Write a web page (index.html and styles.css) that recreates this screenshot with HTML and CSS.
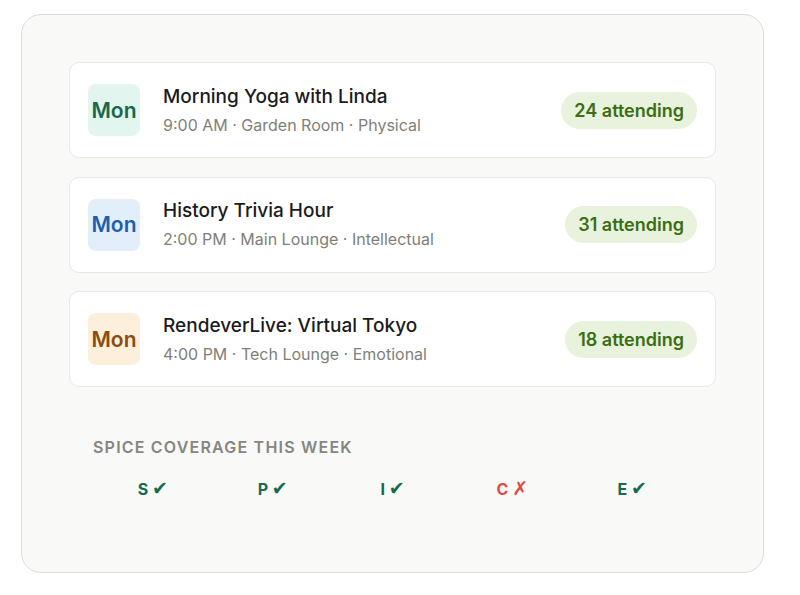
FILE: index.html
```html
<!DOCTYPE html>
<html>
<head>
<meta charset="utf-8">
<link rel="stylesheet" href="styles.css">
</head>
<body>
<div class="panel">
  <div class="list">
    <div class="card">
      <div class="day day-green">Mon</div>
      <div class="info">
        <div class="title">Morning Yoga with Linda</div>
        <div class="meta">9:00 AM · Garden Room · Physical</div>
      </div>
      <div class="pill">24 attending</div>
    </div>
    <div class="card">
      <div class="day day-blue">Mon</div>
      <div class="info">
        <div class="title">History Trivia Hour</div>
        <div class="meta">2:00 PM · Main Lounge · Intellectual</div>
      </div>
      <div class="pill">31 attending</div>
    </div>
    <div class="card">
      <div class="day day-orange">Mon</div>
      <div class="info">
        <div class="title">RendeverLive: Virtual Tokyo</div>
        <div class="meta">4:00 PM · Tech Lounge · Emotional</div>
      </div>
      <div class="pill">18 attending</div>
    </div>
  </div>
  <div class="coverage">
    <div class="cov-title">SPICE COVERAGE THIS WEEK</div>
    <div class="cov-row">
      <div class="cov ok">S <span class="mark">✔</span></div>
      <div class="cov ok">P <span class="mark">✔</span></div>
      <div class="cov ok">I <span class="mark">✔</span></div>
      <div class="cov bad">C <span class="mark">✗</span></div>
      <div class="cov ok">E <span class="mark">✔</span></div>
    </div>
  </div>
</div>
</body>
</html>
```
FILE: styles.css
```css
* { box-sizing: border-box; }
body {
  margin: 0;
  background: #ffffff;
  font-family: Inter, "Noto Sans", sans-serif;
}
.panel {
  margin: 14px 0 0 21px;
  width: 743px;
  height: 559px;
  background: #f9f9f7;
  border: 1px solid #dcdcd8;
  border-radius: 20px;
  padding: 47px;
}
.list {
  display: flex;
  flex-direction: column;
  gap: 18.5px;
}
.card {
  display: flex;
  align-items: center;
  background: #ffffff;
  border: 1px solid #e8e8e4;
  border-radius: 10px;
  padding: 21px 18px 21px 18px;
  height: 96px;
}
.day {
  width: 52px;
  height: 52px;
  border-radius: 8px;
  display: flex;
  align-items: center;
  justify-content: center;
  font-size: 21px;
  font-weight: 600;
  flex-shrink: 0;
}
.day-green { background: #e2f5ee; color: #17694a; }
.day-blue { background: #e3eefb; color: #1d5fae; }
.day-orange { background: #fcefdc; color: #8b4c0c; }
.info {
  flex: 1;
  margin-left: 23px;
  display: flex;
  flex-direction: column;
  gap: 5px;
}
.title {
  font-size: 19px;
  font-weight: 500;
  color: #1b1b1b;
  line-height: 24px;
}
.meta {
  font-size: 16px;
  color: #807f79;
  line-height: 22px;
}
.pill {
  background: #e8f2dd;
  color: #3b6d12;
  font-size: 18px;
  font-weight: 600;
  height: 37px;
  line-height: 37px;
  padding: 0 13px;
  border-radius: 19px;
}
.coverage {
  padding: 50px 24px 0 24px;
}
.cov-title {
  font-size: 16px;
  font-weight: 600;
  letter-spacing: 1.2px;
  color: #86857f;
  line-height: 20px;
}
.cov-row {
  display: grid;
  grid-template-columns: repeat(5, 1fr);
  margin-top: 20px;
}
.cov {
  text-align: center;
  font-size: 16px;
  font-weight: 700;
  line-height: 22px;
}
.mark {
  font-family: "DejaVu Sans", sans-serif;
  font-size: 19px;
}
.ok { color: #176b4d; }
.bad { color: #e04a45; }
```
